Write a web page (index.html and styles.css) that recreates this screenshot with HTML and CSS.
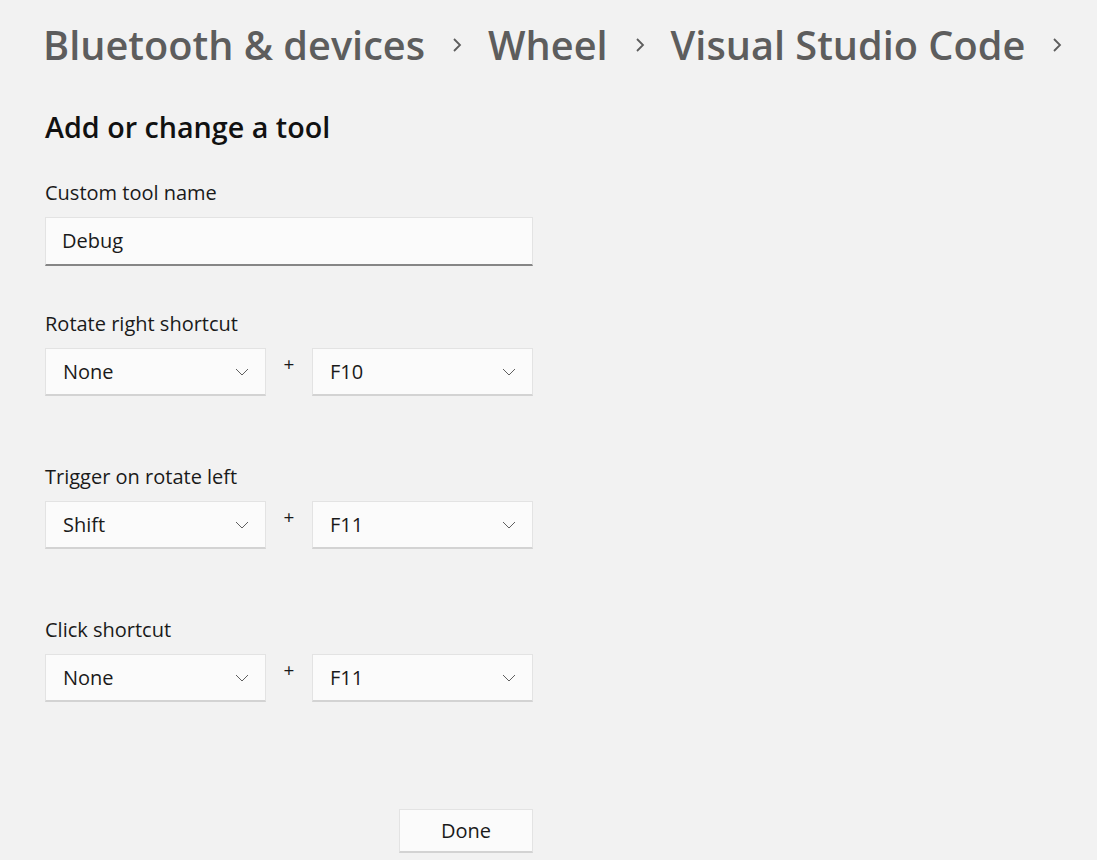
FILE: index.html
```html
<!DOCTYPE html>
<html>
<head>
<meta charset="utf-8">
<link rel="stylesheet" href="styles.css">
</head>
<body>
<div class="page">
  <nav class="crumbs">
    <span class="crumb">Bluetooth &amp; devices</span>
    <svg class="chev" viewBox="0 0 10 16"><path d="M2 2 L8 8 L2 14" fill="none" stroke="#5d5d5d" stroke-width="1.8"/></svg>
    <span class="crumb">Wheel</span>
    <svg class="chev" viewBox="0 0 10 16"><path d="M2 2 L8 8 L2 14" fill="none" stroke="#5d5d5d" stroke-width="1.8"/></svg>
    <span class="crumb">Visual Studio Code</span>
    <svg class="chev" viewBox="0 0 10 16"><path d="M2 2 L8 8 L2 14" fill="none" stroke="#5d5d5d" stroke-width="1.8"/></svg>
  </nav>

  <h1 class="title">Add or change a tool</h1>

  <div class="field">
    <label class="label">Custom tool name</label>
    <div class="textbox">Debug</div>
  </div>

  <div class="group">
    <label class="label">Rotate right shortcut</label>
    <div class="combo-row">
      <div class="combo"><span>None</span><svg class="down" viewBox="0 0 14 8"><path d="M1 1 L7 7 L13 1" fill="none" stroke="#5f5f5f" stroke-width="1"/></svg></div>
      <span class="plus">+</span>
      <div class="combo"><span>F10</span><svg class="down" viewBox="0 0 14 8"><path d="M1 1 L7 7 L13 1" fill="none" stroke="#5f5f5f" stroke-width="1"/></svg></div>
    </div>
  </div>

  <div class="group">
    <label class="label">Trigger on rotate left</label>
    <div class="combo-row">
      <div class="combo"><span>Shift</span><svg class="down" viewBox="0 0 14 8"><path d="M1 1 L7 7 L13 1" fill="none" stroke="#5f5f5f" stroke-width="1"/></svg></div>
      <span class="plus">+</span>
      <div class="combo"><span>F11</span><svg class="down" viewBox="0 0 14 8"><path d="M1 1 L7 7 L13 1" fill="none" stroke="#5f5f5f" stroke-width="1"/></svg></div>
    </div>
  </div>

  <div class="group">
    <label class="label">Click shortcut</label>
    <div class="combo-row">
      <div class="combo"><span>None</span><svg class="down" viewBox="0 0 14 8"><path d="M1 1 L7 7 L13 1" fill="none" stroke="#5f5f5f" stroke-width="1"/></svg></div>
      <span class="plus">+</span>
      <div class="combo"><span>F11</span><svg class="down" viewBox="0 0 14 8"><path d="M1 1 L7 7 L13 1" fill="none" stroke="#5f5f5f" stroke-width="1"/></svg></div>
    </div>
  </div>

  <div class="actions">
    <button class="btn">Done</button>
  </div>
</div>
</body>
</html>
```
FILE: styles.css
```css
html, body {
  margin: 0;
  padding: 0;
  background: #f2f2f2;
  font-family: "Open Sans", "Noto Sans", sans-serif;
  color: #1a1a1a;
}
.page {
  width: 1097px;
  height: 860px;
  overflow: hidden;
  padding: 0 0 0 45px;
  box-sizing: border-box;
}
.crumbs {
  display: flex;
  align-items: center;
  height: 90px;
  margin-left: -2px;
}
.crumb {
  font-size: 39.7px;
  font-weight: 600;
  color: #5d5d5d;
  white-space: nowrap;
}
.chev {
  width: 10px;
  height: 16px;
  margin: 0 26px 0 27px;
}
.title {
  margin: 17px 0 0 0;
  font-size: 28.7px;
  font-weight: 600;
  color: #111;
  line-height: 40px;
}
.field {
  margin-top: 33px;
}
.label {
  display: block;
  font-size: 20px;
  line-height: 26px;
  color: #1a1a1a;
}
.textbox {
  margin-top: 11px;
  width: 488px;
  height: 49px;
  box-sizing: border-box;
  background: #fbfbfb;
  border: 1px solid #e3e3e3;
  border-bottom: 2px solid #868686;
  padding: 0 16px;
  font-size: 20px;
  line-height: 46px;
  color: #1a1a1a;
}
.group {
  margin-top: 45px;
}
.group + .group {
  margin-top: 68px;
}
.combo-row {
  display: flex;
  align-items: flex-start;
  margin-top: 11px;
}
.combo {
  width: 221px;
  height: 48px;
  box-sizing: border-box;
  background: #fbfbfb;
  border: 1px solid #e3e3e3;
  border-bottom: 2px solid #d3d3d3;
  display: flex;
  align-items: center;
  justify-content: space-between;
  padding: 0 16px 0 17px;
  font-size: 20px;
  color: #1a1a1a;
}
.down {
  width: 14px;
  height: 8px;
}
.plus {
  width: 46px;
  text-align: center;
  font-size: 19px;
  line-height: 32px;
  color: #1a1a1a;
}
.actions {
  margin-top: 107px;
  padding-left: 354px;
}
.btn {
  width: 134px;
  height: 44px;
  background: #fbfbfb;
  border: 1px solid #e3e3e3;
  border-bottom: 2px solid #d3d3d3;
  border-radius: 0;
  font-family: inherit;
  font-size: 20px;
  color: #1a1a1a;
  padding: 0;
}
```
